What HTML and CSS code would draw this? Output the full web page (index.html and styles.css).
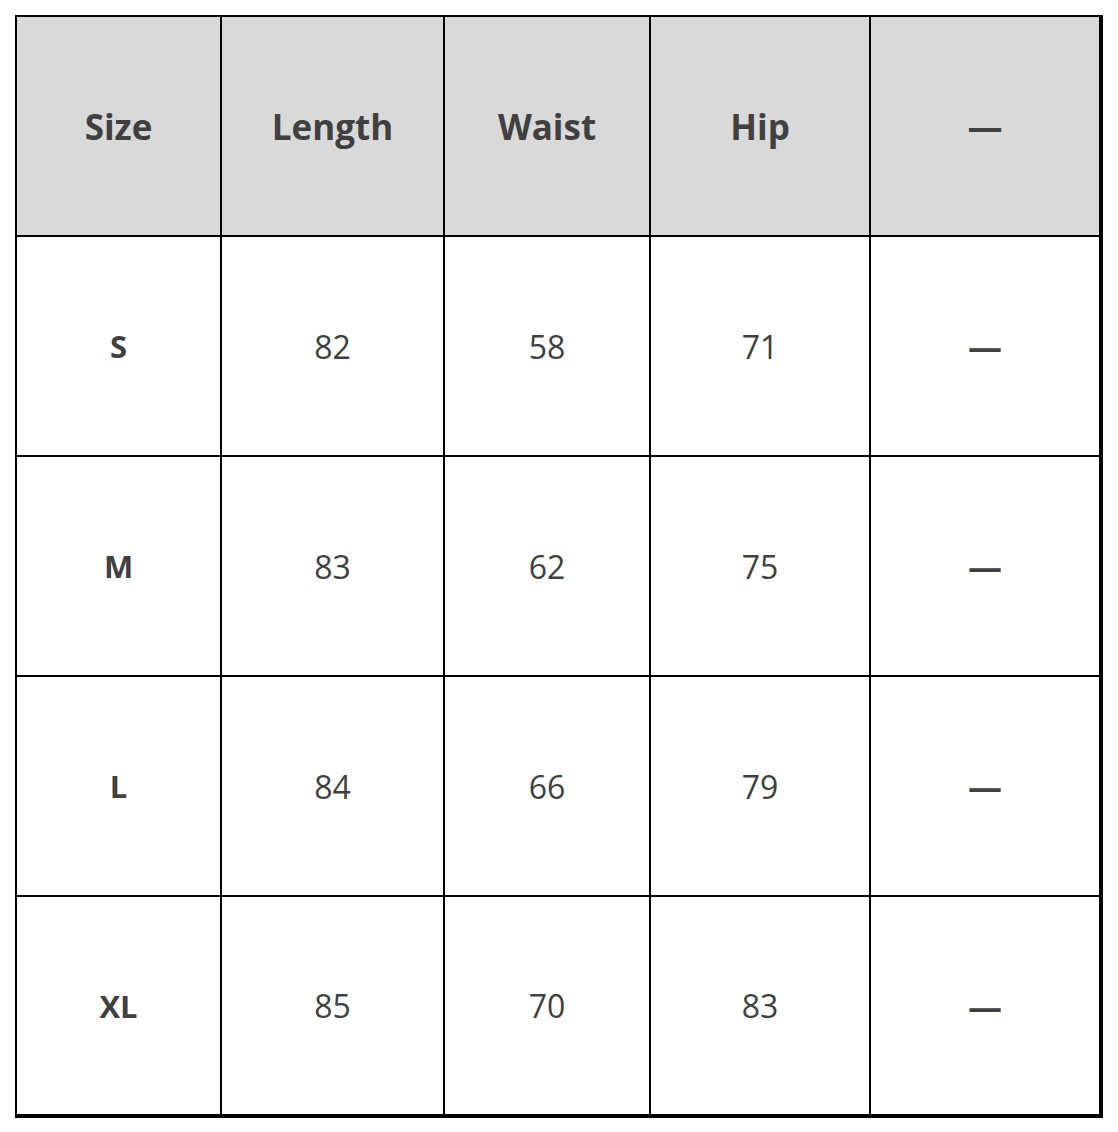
FILE: index.html
```html
<!DOCTYPE html>
<html lang="en">
<head>
<meta charset="utf-8">
<link rel="stylesheet" href="styles.css">
</head>
<body>
<table class="size-table">
  <colgroup>
    <col class="c1"><col class="c2"><col class="c3"><col class="c4"><col class="c5">
  </colgroup>
  <thead>
    <tr class="head-row">
      <th>Size</th><th>Length</th><th>Waist</th><th>Hip</th><th>—</th>
    </tr>
  </thead>
  <tbody>
    <tr><th>S</th><td>82</td><td>58</td><td>71</td><td class="dash">—</td></tr>
    <tr><th>M</th><td>83</td><td>62</td><td>75</td><td class="dash">—</td></tr>
    <tr><th>L</th><td>84</td><td>66</td><td>79</td><td class="dash">—</td></tr>
    <tr class="last"><th>XL</th><td>85</td><td>70</td><td>83</td><td class="dash">—</td></tr>
  </tbody>
</table>
</body>
</html>
```
FILE: styles.css
```css
html, body {
  margin: 0;
  padding: 0;
  background: #ffffff;
}
body {
  padding: 15px 0 0 15px;
  font-family: "Open Sans", "Noto Sans", "Liberation Sans", sans-serif;
  color: #404040;
}
.size-table {
  border-collapse: separate;
  border-spacing: 0;
  table-layout: fixed;
  width: 1088px;
  border-left: 2px solid #000;
  border-top: 2px solid #000;
  border-right: 4px solid #000;
  border-bottom: 4px solid #000;
}
.c1 { width: 205px; }
.c2 { width: 223px; }
.c3 { width: 206px; }
.c4 { width: 220px; }
.c5 { width: 228px; }
.size-table th,
.size-table td {
  padding: 0;
  text-align: center;
  vertical-align: middle;
  height: 220px;
  border-right: 2px solid #000;
  border-bottom: 2px solid #000;
  box-sizing: border-box;
}
.size-table th:last-child,
.size-table td:last-child {
  border-right: none;
}
.size-table .head-row th {
  height: 220px;
}
.size-table tr.last th,
.size-table tr.last td {
  border-bottom: none;
  height: 217px;
}
.head-row th {
  background: #d9d9d9;
  font-size: 35px;
  font-weight: 700;
}
tbody th {
  font-size: 31px;
  font-weight: 700;
}
tbody td {
  font-size: 32px;
  font-weight: 400;
}
tbody td.dash {
  font-weight: 700;
  font-size: 34px;
}
```
